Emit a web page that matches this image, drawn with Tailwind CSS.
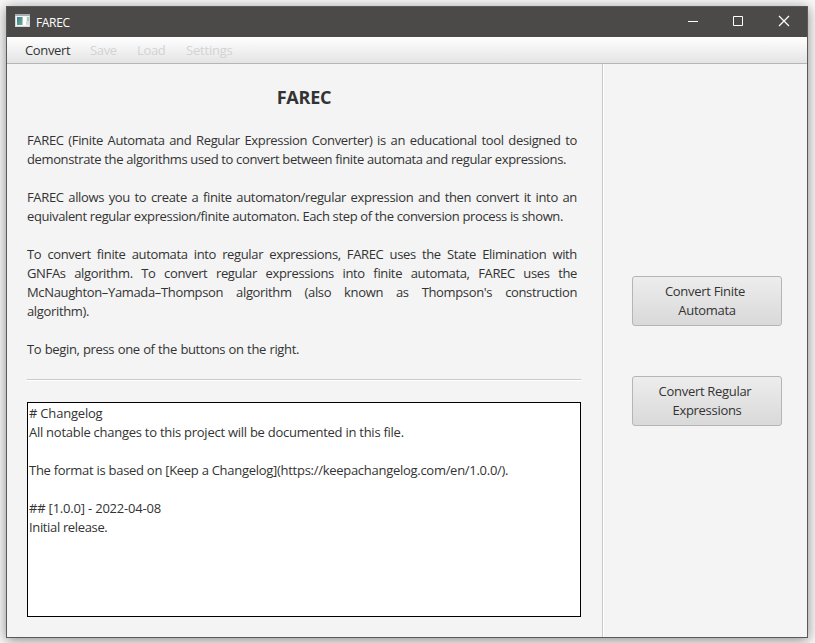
<!DOCTYPE html>
<html lang="en">
<head>
<meta charset="utf-8">
<title>FAREC</title>
<script src="https://cdn.jsdelivr.net/npm/@tailwindcss/browser@4"></script>
</head>
<body class="h-[643px] w-[815px] overflow-hidden bg-[#f8f8f8] pl-[6px] pt-[6px] font-['Open_Sans',sans-serif] text-[13px] leading-[19px] text-[#333]">
<div class="flex h-[632px] w-[802px] flex-col border border-[#5a5957] bg-[#f4f4f4] shadow-[0_2px_12px_rgba(0,0,0,0.45)]">
  <header class="flex h-[30px] shrink-0 items-center bg-[#4c4a48] text-white">
    <svg class="mb-[3px] ml-[8px] h-[13px] w-[15px]" viewBox="0 0 15 13"><rect width="15" height="13" fill="#d5d8da"/><rect width="15" height="2" fill="#a8adb0"/><rect x="1" y="2" width="13" height="10" fill="#f2f3f4"/><defs><linearGradient id="g" x1="0" y1="0" x2="1" y2="1"><stop stop-color="#3f78a0"/><stop offset="1" stop-color="#68b580"/></linearGradient></defs><rect x="2" y="3" width="5.500" height="8" fill="url(#g)"/><rect x="8" y="3" width="3" height="8" fill="#fff"/><rect x="12" y="3" width="2" height="4" fill="#9fcdbb"/><rect x="11" y="7" width="3" height="4" fill="#d8dbde"/></svg>
    <span class="ml-[6px] text-[12px] tracking-[-0.35px]">FAREC</span>
    <div class="-mr-px ml-auto flex">
      <svg class="h-[30px] w-[46px]" viewBox="0 0 46 30"><path d="M18 14.5h10" stroke="#fff"/></svg>
      <svg class="h-[30px] w-[46px]" viewBox="0 0 46 30"><path d="M17.5 9.500h9v9h-9z" fill="none" stroke="#fff"/></svg>
      <svg class="h-[30px] w-[46px]" viewBox="0 0 46 30"><path d="M17 9l10 10m0-10l-10 10" stroke="#fff" stroke-width="1.2"/></svg>
    </div>
  </header>
  <nav class="flex h-[27px] shrink-0 items-center border-b border-[#b5b5b5] bg-linear-to-b from-white to-[#e4e4e4] pl-[18px] text-[#d3d3d3]">
    <span class="w-[65px] tracking-[-0.35px] text-[#333]">Convert</span><span class="w-[47px] tracking-[-0.35px]">Save</span><span class="w-[49px] tracking-[-0.35px]">Load</span><span class="tracking-[-0.2px]">Settings</span>
  </nav>
  <div class="flex min-h-0 flex-1">
    <main class="w-[595px] shrink-0 pl-[20px] pt-[19px]">
      <h1 class="w-[554px] text-center text-[18px] leading-[28px] font-bold tracking-[-0.2px]">FAREC</h1>
      <section class="mt-[20px] whitespace-nowrap tracking-[-0.35px] [&>p]:mb-[19px] [&_span]:block [&_span]:w-[550px] [&_span]:[text-align-last:justify]">
        <p><span>FAREC (Finite Automata and Regular Expression Converter) is an educational tool designed to</span><span class="max-w-[539px] tracking-[-0.38px]">demonstrate the algorithms used to convert between finite automata and regular expressions.</span></p>
        <p><span>FAREC allows you to create a finite automaton/regular expression and then convert it into an</span><span class="max-w-[536px] tracking-[-0.37px]">equivalent regular expression/finite automaton. Each step of the conversion process is shown.</span></p>
        <p><span>To convert finite automata into regular expressions, FAREC uses the State Elimination with</span><span>GNFAs algorithm. To convert regular expressions into finite automata, FAREC uses the</span><span>McNaughton–Yamada–Thompson algorithm (also known as Thompson's construction</span>algorithm).</p>
        <p><span class="max-w-[272px]">To begin, press one of the buttons on the right.</span></p>
      </section>
      <div class="mt-[20px] h-[2px] w-[554px] border-t border-b border-t-[#cacaca] border-b-white"></div>
      <section class="mt-[21px] h-[215px] w-[554px] border border-black bg-white pl-[1px] pt-[1px] whitespace-pre tracking-[-0.35px]"><p class="tracking-[-0.2px]"># Changelog</p><p class="tracking-[-0.26px]">All notable changes to this project will be documented in this file.</p><br><p class="tracking-[-0.28px]">The format is based on [Keep a Changelog](https://keepachangelog.com/en/1.0.0/).</p><br><p class="tracking-[-0.2px]">## [1.0.0] - 2022-04-08</p><p>Initial release.</p></section>
    </main>
    <aside class="flex flex-1 flex-col items-center gap-[50px] border-l border-[#c9c9c9] pl-[4px] pt-[212px] text-center shadow-[inset_1px_0_white]">
      <button class="h-[50px] w-[150px] rounded-[3px] border border-[#b5b5b5] bg-linear-to-b from-[#ededed] to-[#d9d9d9] tracking-[-0.3px]"><span class="block pr-1">Convert Finite</span>Automata</button>
      <button class="h-[50px] w-[150px] rounded-[3px] border border-[#b5b5b5] bg-linear-to-b from-[#ededed] to-[#d9d9d9] tracking-[-0.3px]"><span class="block pr-1">Convert Regular</span>Expressions</button>
    </aside>
  </div>
</div>
</body>
</html>
